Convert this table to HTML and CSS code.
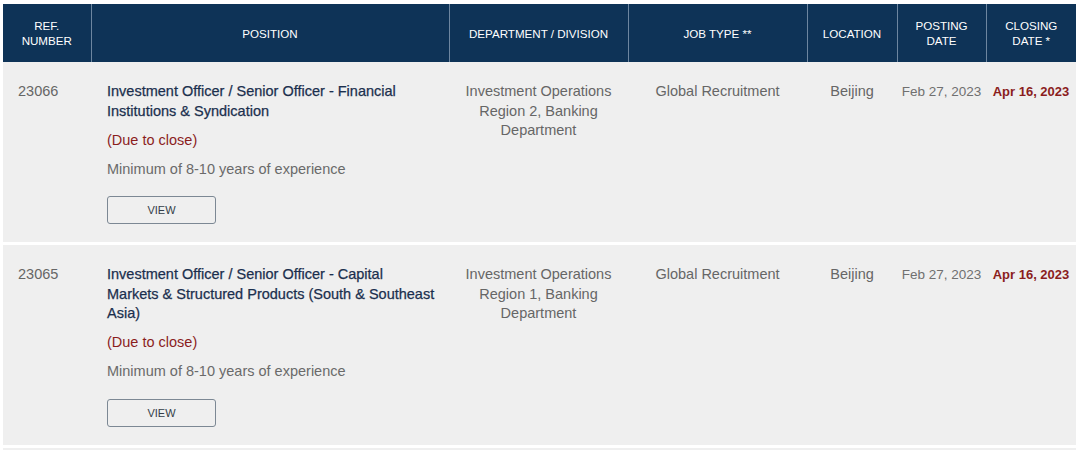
FILE: index.html
```html
<!DOCTYPE html>
<html>
<head>
<meta charset="utf-8">
<link rel="stylesheet" href="styles.css">
</head>
<body>
<table class="jobs">
  <colgroup>
    <col class="c-ref"><col class="c-pos"><col class="c-dept"><col class="c-type"><col class="c-loc"><col class="c-post"><col class="c-close">
  </colgroup>
  <thead>
    <tr>
      <th>REF.<br>NUMBER</th>
      <th>POSITION</th>
      <th>DEPARTMENT / DIVISION</th>
      <th>JOB TYPE **</th>
      <th>LOCATION</th>
      <th>POSTING<br>DATE</th>
      <th>CLOSING<br>DATE *</th>
    </tr>
  </thead>
  <tbody>
    <tr>
      <td class="ref">23066</td>
      <td class="pos">
        <div class="title">Investment Officer / Senior Officer - Financial Institutions &amp; Syndication</div>
        <div class="due">(Due to close)</div>
        <div class="exp">Minimum of 8-10 years of experience</div>
        <button class="view">VIEW</button>
      </td>
      <td class="mid">Investment Operations Region 2, Banking Department</td>
      <td class="mid">Global Recruitment</td>
      <td class="mid">Beijing</td>
      <td class="date">Feb 27, 2023</td>
      <td class="date close">Apr 16, 2023</td>
    </tr>
    <tr>
      <td class="ref">23065</td>
      <td class="pos">
        <div class="title">Investment Officer / Senior Officer - Capital Markets &amp; Structured Products (South &amp; Southeast Asia)</div>
        <div class="due">(Due to close)</div>
        <div class="exp">Minimum of 8-10 years of experience</div>
        <button class="view">VIEW</button>
      </td>
      <td class="mid">Investment Operations Region 1, Banking Department</td>
      <td class="mid">Global Recruitment</td>
      <td class="mid">Beijing</td>
      <td class="date">Feb 27, 2023</td>
      <td class="date close">Apr 16, 2023</td>
    </tr>
    <tr class="stub">
      <td></td><td></td><td></td><td></td><td></td><td></td><td></td>
    </tr>
  </tbody>
</table>
</body>
</html>
```
FILE: styles.css
```css
html, body {
  margin: 0;
  padding: 0;
  background: #ffffff;
}
body {
  padding: 4px 4px 0 3px;
  font-family: "Liberation Sans", Arial, sans-serif;
  overflow: hidden;
}
.jobs {
  width: 1073px;
  border-collapse: collapse;
  table-layout: fixed;
}
.c-ref { width: 88px; }
.c-pos { width: 358px; }
.c-dept { width: 179px; }
.c-type { width: 179px; }
.c-loc { width: 90px; }
.c-post { width: 89px; }
.c-close { width: 90px; }

.jobs th {
  background: #0e3357;
  color: #ffffff;
  font-size: 11.6px;
  font-weight: normal;
  line-height: 15px;
  height: 58px;
  padding: 0 4px;
  text-align: center;
  vertical-align: middle;
  border-left: 1px solid #6d86a0;
}
.jobs th:first-child { border-left: none; }

.jobs td {
  background: #efefef;
  border-bottom: 3px solid #ffffff;
  vertical-align: top;
  padding: 20px 0 18px 0;
  font-size: 14.5px;
  line-height: 19.5px;
  color: #666666;
}
.jobs td.ref {
  padding-left: 15px;
}
.jobs td.pos {
  padding-left: 16px;
  padding-right: 12px;
}
.title {
  color: #1b2f4e;
  -webkit-text-stroke: 0.25px #1b2f4e;
}
.due {
  color: #8b1d1d;
  margin-top: 9.5px;
}
.exp {
  color: #6a6a6a;
  margin-top: 9.5px;
}
.view {
  display: block;
  margin-top: 17px;
  width: 109px;
  height: 28px;
  background: transparent;
  border: 1px solid #7c8894;
  border-radius: 3px;
  font-family: "Liberation Sans", Arial, sans-serif;
  font-size: 11px;
  color: #333d48;
  padding: 0;
}
.jobs td.mid {
  text-align: center;
  padding-left: 8px;
  padding-right: 8px;
}
.jobs td.date {
  text-align: center;
  font-size: 13.5px;
  padding-top: 20px;
  color: #707070;
}
.jobs td.close {
  color: #8b1d1d;
  font-weight: bold;
  font-size: 13px;
}
.jobs tr.stub td {
  height: 10px;
  padding: 0;
}
```
